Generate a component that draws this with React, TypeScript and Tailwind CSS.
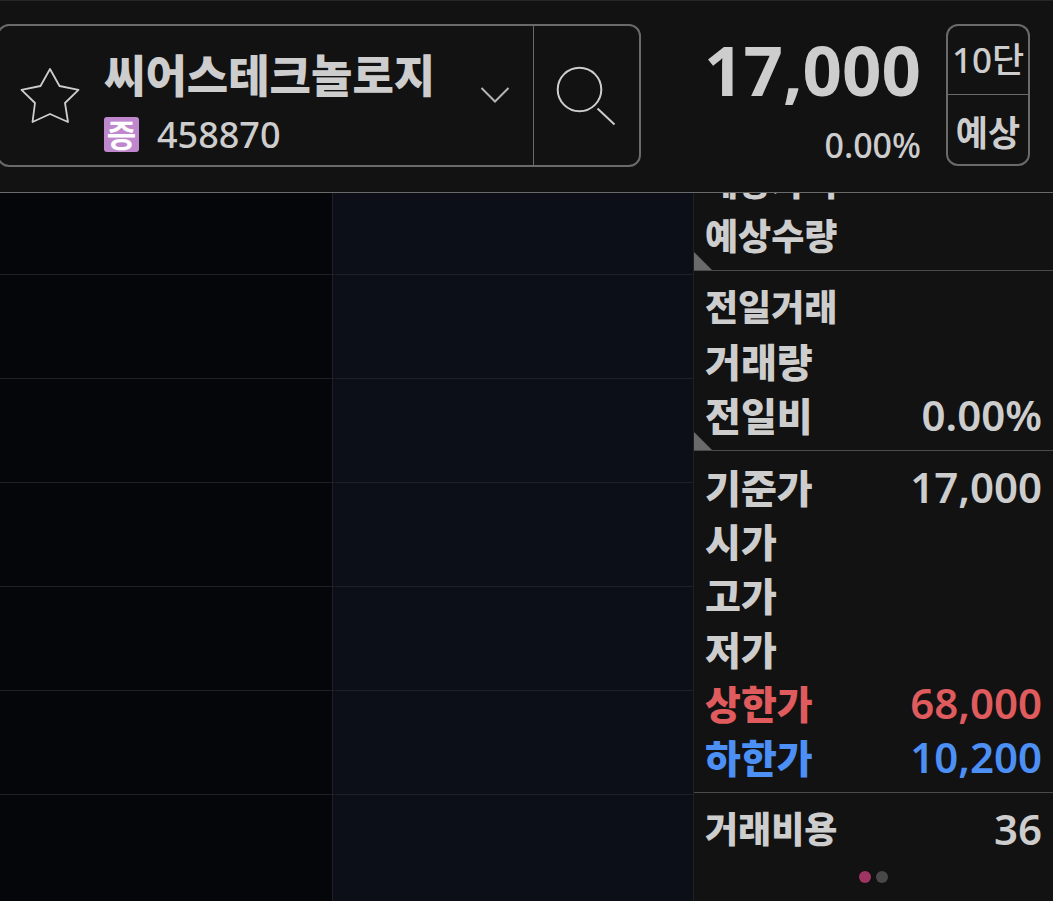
import { useState } from "react";
import clsx from "clsx";

interface InfoRow {
  label: string;
  value?: string;
  tone?: "up" | "down";
}

interface InfoSection {
  id: string;
  rows: InfoRow[];
  corner?: boolean;
  className: string;
}

const SECTIONS: InfoSection[] = [
  {
    id: "expected",
    corner: true,
    // scrolled: only the tail of the first row is still in view
    className: "h-[78px] justify-end pb-[6px] border-b",
    rows: [{ label: "예상가격" }, { label: "예상수량" }],
  },
  {
    id: "volume",
    corner: true,
    className: "pt-[10px] pb-[7px] border-b",
    rows: [{ label: "전일거래" }, { label: "거래량" }, { label: "전일비", value: "0.00%" }],
  },
  {
    id: "price",
    className: "pt-[10px] pb-[7px] border-b",
    rows: [
      { label: "기준가", value: "17,000" },
      { label: "시가" },
      { label: "고가" },
      { label: "저가" },
      { label: "상한가", value: "68,000", tone: "up" },
      { label: "하한가", value: "10,200", tone: "down" },
    ],
  },
  {
    id: "cost",
    className: "pt-[10px]",
    rows: [{ label: "거래비용", value: "36" }],
  },
];

const BOOK_ROWS = [0, 1, 2, 3, 4, 5, 6];

function StockPicker() {
  const [starred, setStarred] = useState(false);

  return (
    <div className="-ml-[3px] flex h-[143px] w-[62.5%] shrink-0 rounded-[12px] border-2 border-[#6a6a6a]">
      <button aria-label="관심종목" onClick={() => setStarred(!starred)} className="w-[105px] shrink-0 pl-[21px]">
        <svg width="60" height="58" viewBox="0 0 60 58" fill={starred ? "#cdcdcd" : "none"} stroke="#cdcdcd" strokeWidth="1.8" strokeLinejoin="round">
          <path d="M30 2 L39.5 19 L58.5 22.800 L45 36 L48 55 L30 47 L12.500 55 L15 36 L1.500 22.800 L20.500 19 Z" />
        </svg>
      </button>
      <button className="flex min-w-0 flex-1 items-center pt-[12px] text-left">
        <span className="flex-1">
          <span className="block text-[45px] leading-[62px] font-black whitespace-nowrap">씨어스테크놀로지</span>
          <span className="flex items-center gap-[18px] pt-[4px]">
            <span className="flex size-[35px] items-center justify-center rounded-[3px] bg-[#c088cc] text-[32px] leading-[35px] font-bold text-white">
              증
            </span>
            <span className="text-[36px] leading-[48px] font-medium">458870</span>
          </span>
        </span>
        <svg className="mr-[23px] -mt-[14px] shrink-0" width="30" height="18" viewBox="0 0 30 18" fill="none" stroke="#b4b4b4" strokeWidth="2">
          <path d="M1.500 2 L15 15.500 L28.500 2" />
        </svg>
      </button>
      <button aria-label="종목검색" className="flex w-[106px] shrink-0 items-center justify-center border-l border-[#6a6a6a]">
        <svg width="60" height="60" viewBox="0 0 60 60" fill="none" stroke="#cdcdcd" strokeWidth="2">
          <circle cx="23.500" cy="23.500" r="21.800" />
          <path d="M41.500 42.500 L58.500 58.500" />
        </svg>
      </button>
    </div>
  );
}

function Header() {
  return (
    <header className="flex h-[193px] items-start border-t border-b border-t-[#262626] border-b-[#6a6a6a] pt-[23px] pr-[23px]">
      <StockPicker />
      <div className="flex-1 text-right whitespace-nowrap">
        <p className="text-[69px] leading-[90px] font-bold">17,000</p>
        <p className="text-[34px] leading-[62px] font-medium">0.00%</p>
      </div>
      <div className="ml-[25px] grid h-[142px] w-[84px] shrink-0 grid-rows-2 rounded-[12px] border-2 border-[#6a6a6a] text-[35px] font-medium whitespace-nowrap">
        <button className="flex items-center justify-center border-b border-[#6a6a6a] leading-[48px]">10단</button>
        <button className="flex items-center justify-center pt-[6px] leading-[48px] font-bold">예상</button>
      </div>
    </header>
  );
}

function Section({ rows, corner, className }: InfoSection) {
  return (
    <dl className={clsx("relative flex flex-col overflow-hidden border-[#4a4a4a] pr-[11px] pl-[11px]", className)}>
      {rows.map((row) => (
        <div
          key={row.label}
          className={clsx(
            "flex h-[54px] shrink-0 items-center justify-between leading-[54px] whitespace-nowrap",
            row.tone === "up" && "text-[#df5b5d]",
            row.tone === "down" && "text-[#4c8ff5]",
          )}
        >
          <dt className={clsx("font-black", row.label.length > 3 ? "text-[36px]" : "text-[39px]")}>{row.label}</dt>
          <dd className="pb-[2px] text-[42px] font-semibold">{row.value}</dd>
        </div>
      ))}
      {corner && (
        <svg className="absolute bottom-0 left-0" width="18" height="18" viewBox="0 0 18 18" fill="#6a6a6a">
          <path d="M0 0 L18 18 H0 Z" />
        </svg>
      )}
    </dl>
  );
}

export default function App() {
  return (
    <div className="flex min-h-screen flex-col bg-[#121212] font-['Noto_Sans','Noto_Sans_CJK_KR',sans-serif] text-[#cdcdcd]">
      <Header />
      <main className="grid flex-1 grid-cols-[333fr_361fr_359fr]">
        <div className="border-r border-[#1e2028] bg-[#05060a]">
          {BOOK_ROWS.map((i) => (
            <div key={i} className="h-[104px] border-b border-[#1e2028] first:h-[82px] last:border-0" />
          ))}
        </div>
        <div className="border-r border-[#1e2028] bg-[#0c0e18]">
          {BOOK_ROWS.map((i) => (
            <div key={i} className="h-[104px] border-b border-[#1e2028] first:h-[82px] last:border-0" />
          ))}
        </div>
        <aside className="min-w-0">
          {SECTIONS.map((section) => (
            <Section key={section.id} {...section} />
          ))}
          <div className="flex justify-center gap-[5px] pt-[14px]">
            <span className="size-[12px] rounded-full bg-[#9e3462]" />
            <span className="size-[12px] rounded-full bg-[#484848]" />
          </div>
        </aside>
      </main>
    </div>
  );
}
